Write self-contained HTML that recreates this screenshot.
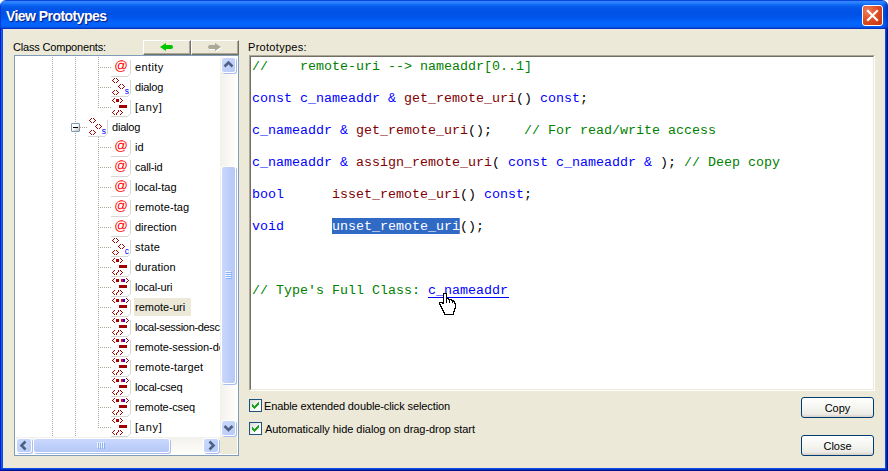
<!DOCTYPE html>
<html><head><meta charset="utf-8"><title>View Prototypes</title>
<style>
*{box-sizing:border-box;margin:0;padding:0}
html,body{width:888px;height:471px;overflow:hidden;background:#fff}
body{position:relative;font-family:"Liberation Sans",sans-serif;font-size:11px;color:#000}
#win{position:absolute;left:0;top:0;width:888px;height:471px;background:#ece9d8;overflow:hidden;border-radius:6px 6px 0 0}
#tb{position:absolute;left:0;top:0;width:888px;height:29px;
 background:linear-gradient(to bottom,#0a46dc 0px,#0a46dc 1px,#3485ff 1px,#2b80fd 3px,#1670f8 4px,#0860f0 6px,#0356e8 8px,#0052e6 14px,#0058ee 18px,#0462fa 22px,#0564fc 26px,#0450e0 27.5px,#0332c4 28px,#0332c4 29px);}
#tb .ttl{position:absolute;left:6px;top:8px;font-weight:bold;font-size:14px;line-height:16px;color:#fff;text-shadow:1px 1px 1px #0a1883;letter-spacing:-0.55px;white-space:nowrap}
#bl,#br{position:absolute;top:29px;width:3px;height:442px;background:linear-gradient(to right,#0019cf 0px,#0019cf 1px,#0d5eec 1px,#0d5eec 2px,#0a4fe0 2px,#0a4fe0 3px)}
#bl{left:0}#br{left:885px;background:linear-gradient(to right,#0a4fe6 0px,#0a4fe6 1px,#0028b4 1px,#0028b4 2px,#00138c 2px,#00138c 3px)}
#bb{position:absolute;left:0;top:468px;width:886px;height:3px;background:linear-gradient(to bottom,#0a4fe6 0px,#0a4fe6 1px,#0030c0 1px,#0030c0 2px,#00138c 2px,#00138c 3px)}
#x{position:absolute;left:862px;top:5px;width:21px;height:21px;border:1px solid #fff;border-radius:3px;
 background:radial-gradient(circle at 25% 25%,#ee7f5c 0%,#e04f26 45%,#c5330b 100%)}
.lab{position:absolute;white-space:nowrap;line-height:13px}
.ab{position:absolute;top:40px;width:48px;height:15px;background:#ece9d8;border:1px solid;border-color:#fff #716f64 #716f64 #fff;box-shadow:inset -1px -1px 0 #aca899}
#tree{position:absolute;left:14px;top:55px;width:225px;height:401px;border:1px solid #7f9db9;background:#fff}
#tc{position:absolute;left:1px;top:1px;width:204px;height:380px;overflow:hidden;background:#fff}
.row{position:absolute;height:20px;white-space:nowrap}
.ic{position:absolute;left:0;top:0}
.lb{position:absolute;left:22px;top:1px;height:18px;line-height:19px;padding:0 2px;font-size:11px}
.lb.sel{background:#ece9d8;left:23px;padding:0 0 0 1px;width:57px}
.vd{position:absolute;width:1px;background-image:linear-gradient(to bottom,#aca899 50%,transparent 50%);background-size:1px 2px}
.hd{position:absolute;height:1px;background-image:linear-gradient(to right,#aca899 50%,transparent 50%);background-size:2px 1px}
.sbtn{position:absolute;border:1px solid #fff;border-radius:3px;background:linear-gradient(135deg,#cbdafd,#b7c9f6);box-shadow:1px 1px 0 #a9bdf0}
#vs{position:absolute;left:205px;top:1px;width:17px;height:380px;background:linear-gradient(to right,#f3f1ec,#fefefb)}
#hs{position:absolute;left:1px;top:381px;width:204px;height:17px;background:linear-gradient(to bottom,#f3f1ec,#fefefb)}
#cn{position:absolute;left:205px;top:381px;width:17px;height:17px;background:#ece9d8}
.thumb{position:absolute;border:1px solid #fff;border-radius:3px;background:#c3d3fd;box-shadow:1px 1px 0 #a9bdf0}
#vs .thumb{background:linear-gradient(to right,#cad8fd,#bccdf9 60%,#b6c8f5)}
#hs .thumb{background:linear-gradient(to bottom,#cad8fd,#bccdf9 60%,#b6c8f5)}
#ta{position:absolute;left:249px;top:55px;width:626px;height:336px;background:#fff;border:1px solid;border-color:#aca899 #fff #fff #aca899;}
#ta:before{content:"";position:absolute;left:0;top:0;right:0;bottom:0;border:1px solid;border-color:#716f64 #ece9d8 #ece9d8 #716f64}
#code{position:absolute;left:2px;top:3px;font-family:"Liberation Mono",monospace;font-size:12px;transform:scaleX(1.11111);transform-origin:0 0;line-height:16px;white-space:pre;color:#000}
.g{color:#008000}.b{color:#0000ff}.r{color:#800000}
.hl{position:relative;color:#fff}
.hl:before{content:"";position:absolute;left:0;right:0;top:-2px;height:16px;background:#316ac5;z-index:-1}
.lk{color:#0000ff}
.cb{position:absolute;left:249px;width:13px;height:13px;border:1px solid #1c5180;background:linear-gradient(135deg,#dcdcd7,#fff 80%)}
.btn{position:absolute;left:801px;width:73px;height:21px;border:1px solid #003c74;border-radius:3px;background:linear-gradient(to bottom,#fff 0%,#f3f3ee 60%,#ecebe5 85%,#d6d0c5 100%);text-align:center;line-height:19px;padding-top:1px;font-size:11px}
</style></head><body>
<div id="win">
<div id="tb"><div class="ttl">View Prototypes</div>
<i style="position:absolute;left:883px;top:0;width:5px;height:29px;background:linear-gradient(to right,rgba(0,20,150,0),rgba(0,20,150,.55))"></i><i style="position:absolute;left:0;top:0;width:1px;height:29px;background:rgba(0,20,170,.45)"></i><div id="x"><svg width="19" height="19" viewBox="0 0 19 19" style="position:absolute;left:0;top:0"><path d="M5 5L14 14M14 5L5 14" stroke="#fff" stroke-width="2.2" stroke-linecap="square"/></svg></div></div>
<div id="bl"></div><div id="br"></div><div id="bb"></div><i style="position:absolute;left:0;top:468px;width:1px;height:3px;background:#0019cf"></i>

<div class="lab" style="left:13px;top:41px;letter-spacing:-0.18px">Class Components:</div>
<div class="lab" style="left:248px;top:41px;letter-spacing:0.3px">Prototypes:</div>

<div class="ab" style="left:143px"><svg width="46" height="13" style="position:absolute;left:0;top:0"><path d="M16 6L22 2V4H27A2 2 0 0 1 27 8H22V10Z" fill="#00c400"/></svg></div>
<div class="ab" style="left:191px"><svg width="46" height="13" style="position:absolute;left:0;top:0"><path transform="translate(1 1)" d="M29 6L23 2V4H18A2 2 0 0 0 18 8H23V10Z" fill="#fff"/><path d="M29 6L23 2V4H18A2 2 0 0 0 18 8H23V10Z" fill="#aca899"/></svg></div>

<div id="tree">
 <div id="tc">
  <i class="vd" style="left:36px;top:0;height:380px"></i>
  <i class="vd" style="left:59px;top:0;height:380px"></i>
  <i class="vd" style="left:82px;top:0;height:51px"></i>
  <i class="vd" style="left:82px;top:80px;height:291px"></i>
  <i class="hd" style="left:82px;top:10px;width:13px"></i><div class="row" style="top:0px;left:95px"><svg class="ic" width="20" height="20" viewBox="0 0 20 20" shape-rendering="crispEdges"><path d="M19.5 3V16.5L16.5 19.5H0" fill="none" stroke="#d6d6d2" stroke-width="1"/><text x="10" y="13" text-anchor="middle" text-rendering="geometricPrecision" font-family="Liberation Sans,sans-serif" font-size="13.4" fill="#ff0000">@</text></svg><span class="lb" style="letter-spacing:0.4px">entity</span></div><i class="hd" style="left:82px;top:30px;width:13px"></i><div class="row" style="top:20px;left:95px"><svg class="ic" width="20" height="20" viewBox="0 0 20 20" shape-rendering="crispEdges"><path d="M19.5 3V16.5L16.5 19.5H0" fill="none" stroke="#d6d6d2" stroke-width="1"/><path fill="#a00000" d="M3 1h1v1h-1zM2 2h1v1h-1zM1 3h1v1h-1zM2 4h1v1h-1zM3 5h1v1h-1zM5 1h1v1h-1zM6 2h1v1h-1zM7 3h1v1h-1zM6 4h1v1h-1zM5 5h1v1h-1zM9 7h1v1h-1zM8 8h1v1h-1zM7 9h1v1h-1zM8 10h1v1h-1zM9 11h1v1h-1zM11 7h1v1h-1zM12 8h1v1h-1zM13 9h1v1h-1zM12 10h1v1h-1zM11 11h1v1h-1zM3 13h1v1h-1zM2 14h1v1h-1zM1 15h1v1h-1zM2 16h1v1h-1zM3 17h1v1h-1zM5 13h1v1h-1zM6 14h1v1h-1zM7 15h1v1h-1zM6 16h1v1h-1zM5 17h1v1h-1z"/><text x="13.8" y="17" font-family="Liberation Sans,sans-serif" font-size="8.5" fill="#0000ff">s</text></svg><span class="lb" style="letter-spacing:-0.2px">dialog</span></div><i class="hd" style="left:82px;top:50px;width:13px"></i><div class="row" style="top:40px;left:95px"><svg class="ic" width="20" height="20" viewBox="0 0 20 20" shape-rendering="crispEdges"><path d="M19.5 3V16.5L16.5 19.5H0" fill="none" stroke="#d6d6d2" stroke-width="1"/><path fill="#a00000" d="M3 1h1v1h-1zM2 2h1v1h-1zM1 3h1v1h-1zM2 4h1v1h-1zM3 5h1v1h-1zM9 1h1v1h-1zM10 2h1v1h-1zM11 3h1v1h-1zM10 4h1v1h-1zM9 5h1v1h-1zM3 13h1v1h-1zM2 14h1v1h-1zM1 15h1v1h-1zM2 16h1v1h-1zM3 17h1v1h-1zM7 13h1v1h-1zM7 14h1v1h-1zM6 15h1v1h-1zM5 16h1v1h-1zM5 17h1v1h-1zM9 13h1v1h-1zM10 14h1v1h-1zM11 15h1v1h-1zM10 16h1v1h-1zM9 17h1v1h-1zM5 2h3v3h-3zM8 8h8v3h-8z"/></svg><span class="lb" style="letter-spacing:0.75px">[any]</span></div><i class="hd" style="left:64px;top:70px;width:7px"></i><div class="row" style="top:60px;left:72px"><svg class="ic" width="20" height="20" viewBox="0 0 20 20" shape-rendering="crispEdges"><path d="M19.5 3V16.5L16.5 19.5H0" fill="none" stroke="#d6d6d2" stroke-width="1"/><path fill="#a00000" d="M3 1h1v1h-1zM2 2h1v1h-1zM1 3h1v1h-1zM2 4h1v1h-1zM3 5h1v1h-1zM5 1h1v1h-1zM6 2h1v1h-1zM7 3h1v1h-1zM6 4h1v1h-1zM5 5h1v1h-1zM9 7h1v1h-1zM8 8h1v1h-1zM7 9h1v1h-1zM8 10h1v1h-1zM9 11h1v1h-1zM11 7h1v1h-1zM12 8h1v1h-1zM13 9h1v1h-1zM12 10h1v1h-1zM11 11h1v1h-1zM3 13h1v1h-1zM2 14h1v1h-1zM1 15h1v1h-1zM2 16h1v1h-1zM3 17h1v1h-1zM5 13h1v1h-1zM6 14h1v1h-1zM7 15h1v1h-1zM6 16h1v1h-1zM5 17h1v1h-1z"/><text x="13.8" y="17" font-family="Liberation Sans,sans-serif" font-size="8.5" fill="#0000ff">s</text></svg><span class="lb" style="letter-spacing:-0.2px">dialog</span></div><i class="hd" style="left:82px;top:90px;width:13px"></i><div class="row" style="top:80px;left:95px"><svg class="ic" width="20" height="20" viewBox="0 0 20 20" shape-rendering="crispEdges"><path d="M19.5 3V16.5L16.5 19.5H0" fill="none" stroke="#d6d6d2" stroke-width="1"/><text x="10" y="13" text-anchor="middle" text-rendering="geometricPrecision" font-family="Liberation Sans,sans-serif" font-size="13.4" fill="#ff0000">@</text></svg><span class="lb" style="letter-spacing:0px">id</span></div><i class="hd" style="left:82px;top:110px;width:13px"></i><div class="row" style="top:100px;left:95px"><svg class="ic" width="20" height="20" viewBox="0 0 20 20" shape-rendering="crispEdges"><path d="M19.5 3V16.5L16.5 19.5H0" fill="none" stroke="#d6d6d2" stroke-width="1"/><text x="10" y="13" text-anchor="middle" text-rendering="geometricPrecision" font-family="Liberation Sans,sans-serif" font-size="13.4" fill="#ff0000">@</text></svg><span class="lb" style="letter-spacing:-0.17px">call-id</span></div><i class="hd" style="left:82px;top:130px;width:13px"></i><div class="row" style="top:120px;left:95px"><svg class="ic" width="20" height="20" viewBox="0 0 20 20" shape-rendering="crispEdges"><path d="M19.5 3V16.5L16.5 19.5H0" fill="none" stroke="#d6d6d2" stroke-width="1"/><text x="10" y="13" text-anchor="middle" text-rendering="geometricPrecision" font-family="Liberation Sans,sans-serif" font-size="13.4" fill="#ff0000">@</text></svg><span class="lb" style="letter-spacing:0px">local-tag</span></div><i class="hd" style="left:82px;top:150px;width:13px"></i><div class="row" style="top:140px;left:95px"><svg class="ic" width="20" height="20" viewBox="0 0 20 20" shape-rendering="crispEdges"><path d="M19.5 3V16.5L16.5 19.5H0" fill="none" stroke="#d6d6d2" stroke-width="1"/><text x="10" y="13" text-anchor="middle" text-rendering="geometricPrecision" font-family="Liberation Sans,sans-serif" font-size="13.4" fill="#ff0000">@</text></svg><span class="lb" style="letter-spacing:0.11px">remote-tag</span></div><i class="hd" style="left:82px;top:170px;width:13px"></i><div class="row" style="top:160px;left:95px"><svg class="ic" width="20" height="20" viewBox="0 0 20 20" shape-rendering="crispEdges"><path d="M19.5 3V16.5L16.5 19.5H0" fill="none" stroke="#d6d6d2" stroke-width="1"/><text x="10" y="13" text-anchor="middle" text-rendering="geometricPrecision" font-family="Liberation Sans,sans-serif" font-size="13.4" fill="#ff0000">@</text></svg><span class="lb" style="letter-spacing:0px">direction</span></div><i class="hd" style="left:82px;top:190px;width:13px"></i><div class="row" style="top:180px;left:95px"><svg class="ic" width="20" height="20" viewBox="0 0 20 20" shape-rendering="crispEdges"><path d="M19.5 3V16.5L16.5 19.5H0" fill="none" stroke="#d6d6d2" stroke-width="1"/><path fill="#a00000" d="M3 1h1v1h-1zM2 2h1v1h-1zM1 3h1v1h-1zM2 4h1v1h-1zM3 5h1v1h-1zM5 1h1v1h-1zM6 2h1v1h-1zM7 3h1v1h-1zM6 4h1v1h-1zM5 5h1v1h-1zM9 7h1v1h-1zM8 8h1v1h-1zM7 9h1v1h-1zM8 10h1v1h-1zM9 11h1v1h-1zM11 7h1v1h-1zM12 8h1v1h-1zM13 9h1v1h-1zM12 10h1v1h-1zM11 11h1v1h-1zM3 13h1v1h-1zM2 14h1v1h-1zM1 15h1v1h-1zM2 16h1v1h-1zM3 17h1v1h-1zM5 13h1v1h-1zM6 14h1v1h-1zM7 15h1v1h-1zM6 16h1v1h-1zM5 17h1v1h-1z"/><text x="13.8" y="17" font-family="Liberation Sans,sans-serif" font-size="8.5" fill="#0000ff">c</text></svg><span class="lb" style="letter-spacing:0.25px">state</span></div><i class="hd" style="left:82px;top:210px;width:13px"></i><div class="row" style="top:200px;left:95px"><svg class="ic" width="20" height="20" viewBox="0 0 20 20" shape-rendering="crispEdges"><path d="M19.5 3V16.5L16.5 19.5H0" fill="none" stroke="#d6d6d2" stroke-width="1"/><path fill="#a00000" d="M3 1h1v1h-1zM2 2h1v1h-1zM1 3h1v1h-1zM2 4h1v1h-1zM3 5h1v1h-1zM9 1h1v1h-1zM10 2h1v1h-1zM11 3h1v1h-1zM10 4h1v1h-1zM9 5h1v1h-1zM3 13h1v1h-1zM2 14h1v1h-1zM1 15h1v1h-1zM2 16h1v1h-1zM3 17h1v1h-1zM7 13h1v1h-1zM7 14h1v1h-1zM6 15h1v1h-1zM5 16h1v1h-1zM5 17h1v1h-1zM9 13h1v1h-1zM10 14h1v1h-1zM11 15h1v1h-1zM10 16h1v1h-1zM9 17h1v1h-1zM5 2h3v3h-3zM8 8h8v3h-8z"/></svg><span class="lb" style="letter-spacing:0.14px">duration</span></div><i class="hd" style="left:82px;top:230px;width:13px"></i><div class="row" style="top:220px;left:95px"><svg class="ic" width="20" height="20" viewBox="0 0 20 20" shape-rendering="crispEdges"><path d="M19.5 3V16.5L16.5 19.5H0" fill="none" stroke="#d6d6d2" stroke-width="1"/><path fill="#a00000" d="M3 1h1v1h-1zM2 2h1v1h-1zM1 3h1v1h-1zM2 4h1v1h-1zM3 5h1v1h-1zM15 1h1v1h-1zM16 2h1v1h-1zM17 3h1v1h-1zM16 4h1v1h-1zM15 5h1v1h-1zM3 13h1v1h-1zM2 14h1v1h-1zM1 15h1v1h-1zM2 16h1v1h-1zM3 17h1v1h-1zM7 13h1v1h-1zM7 14h1v1h-1zM6 15h1v1h-1zM5 16h1v1h-1zM5 17h1v1h-1zM9 13h1v1h-1zM10 14h1v1h-1zM11 15h1v1h-1zM10 16h1v1h-1zM9 17h1v1h-1zM5 2h3v3h-3zM8 8h8v3h-8z"/><path fill="#ff0000" d="M10 2h2v3h-2z"/><path fill="#0000ff" d="M12 2h2v3h-2z"/></svg><span class="lb" style="letter-spacing:-0.12px">local-uri</span></div><i class="hd" style="left:82px;top:250px;width:13px"></i><div class="row" style="top:240px;left:95px"><svg class="ic" width="20" height="20" viewBox="0 0 20 20" shape-rendering="crispEdges"><path d="M19.5 3V16.5L16.5 19.5H0" fill="none" stroke="#d6d6d2" stroke-width="1"/><path fill="#a00000" d="M3 1h1v1h-1zM2 2h1v1h-1zM1 3h1v1h-1zM2 4h1v1h-1zM3 5h1v1h-1zM15 1h1v1h-1zM16 2h1v1h-1zM17 3h1v1h-1zM16 4h1v1h-1zM15 5h1v1h-1zM3 13h1v1h-1zM2 14h1v1h-1zM1 15h1v1h-1zM2 16h1v1h-1zM3 17h1v1h-1zM7 13h1v1h-1zM7 14h1v1h-1zM6 15h1v1h-1zM5 16h1v1h-1zM5 17h1v1h-1zM9 13h1v1h-1zM10 14h1v1h-1zM11 15h1v1h-1zM10 16h1v1h-1zM9 17h1v1h-1zM5 2h3v3h-3zM8 8h8v3h-8z"/><path fill="#ff0000" d="M10 2h2v3h-2z"/><path fill="#0000ff" d="M12 2h2v3h-2z"/></svg><span class="lb sel" style="letter-spacing:0px">remote-uri</span></div><i class="hd" style="left:82px;top:270px;width:13px"></i><div class="row" style="top:260px;left:95px"><svg class="ic" width="20" height="20" viewBox="0 0 20 20" shape-rendering="crispEdges"><path d="M19.5 3V16.5L16.5 19.5H0" fill="none" stroke="#d6d6d2" stroke-width="1"/><path fill="#a00000" d="M3 1h1v1h-1zM2 2h1v1h-1zM1 3h1v1h-1zM2 4h1v1h-1zM3 5h1v1h-1zM15 1h1v1h-1zM16 2h1v1h-1zM17 3h1v1h-1zM16 4h1v1h-1zM15 5h1v1h-1zM3 13h1v1h-1zM2 14h1v1h-1zM1 15h1v1h-1zM2 16h1v1h-1zM3 17h1v1h-1zM7 13h1v1h-1zM7 14h1v1h-1zM6 15h1v1h-1zM5 16h1v1h-1zM5 17h1v1h-1zM9 13h1v1h-1zM10 14h1v1h-1zM11 15h1v1h-1zM10 16h1v1h-1zM9 17h1v1h-1zM5 2h3v3h-3zM8 8h8v3h-8z"/><path fill="#ff0000" d="M10 2h2v3h-2z"/><path fill="#0000ff" d="M12 2h2v3h-2z"/></svg><span class="lb" style="letter-spacing:-0.32px">local-session-description</span></div><i class="hd" style="left:82px;top:290px;width:13px"></i><div class="row" style="top:280px;left:95px"><svg class="ic" width="20" height="20" viewBox="0 0 20 20" shape-rendering="crispEdges"><path d="M19.5 3V16.5L16.5 19.5H0" fill="none" stroke="#d6d6d2" stroke-width="1"/><path fill="#a00000" d="M3 1h1v1h-1zM2 2h1v1h-1zM1 3h1v1h-1zM2 4h1v1h-1zM3 5h1v1h-1zM15 1h1v1h-1zM16 2h1v1h-1zM17 3h1v1h-1zM16 4h1v1h-1zM15 5h1v1h-1zM3 13h1v1h-1zM2 14h1v1h-1zM1 15h1v1h-1zM2 16h1v1h-1zM3 17h1v1h-1zM7 13h1v1h-1zM7 14h1v1h-1zM6 15h1v1h-1zM5 16h1v1h-1zM5 17h1v1h-1zM9 13h1v1h-1zM10 14h1v1h-1zM11 15h1v1h-1zM10 16h1v1h-1zM9 17h1v1h-1zM5 2h3v3h-3zM8 8h8v3h-8z"/><path fill="#ff0000" d="M10 2h2v3h-2z"/><path fill="#0000ff" d="M12 2h2v3h-2z"/></svg><span class="lb" style="letter-spacing:-0.08px">remote-session-description</span></div><i class="hd" style="left:82px;top:310px;width:13px"></i><div class="row" style="top:300px;left:95px"><svg class="ic" width="20" height="20" viewBox="0 0 20 20" shape-rendering="crispEdges"><path d="M19.5 3V16.5L16.5 19.5H0" fill="none" stroke="#d6d6d2" stroke-width="1"/><path fill="#a00000" d="M3 1h1v1h-1zM2 2h1v1h-1zM1 3h1v1h-1zM2 4h1v1h-1zM3 5h1v1h-1zM15 1h1v1h-1zM16 2h1v1h-1zM17 3h1v1h-1zM16 4h1v1h-1zM15 5h1v1h-1zM3 13h1v1h-1zM2 14h1v1h-1zM1 15h1v1h-1zM2 16h1v1h-1zM3 17h1v1h-1zM7 13h1v1h-1zM7 14h1v1h-1zM6 15h1v1h-1zM5 16h1v1h-1zM5 17h1v1h-1zM9 13h1v1h-1zM10 14h1v1h-1zM11 15h1v1h-1zM10 16h1v1h-1zM9 17h1v1h-1zM5 2h3v3h-3zM8 8h8v3h-8z"/><path fill="#ff0000" d="M10 2h2v3h-2z"/><path fill="#0000ff" d="M12 2h2v3h-2z"/></svg><span class="lb" style="letter-spacing:0.17px">remote-target</span></div><i class="hd" style="left:82px;top:330px;width:13px"></i><div class="row" style="top:320px;left:95px"><svg class="ic" width="20" height="20" viewBox="0 0 20 20" shape-rendering="crispEdges"><path d="M19.5 3V16.5L16.5 19.5H0" fill="none" stroke="#d6d6d2" stroke-width="1"/><path fill="#a00000" d="M3 1h1v1h-1zM2 2h1v1h-1zM1 3h1v1h-1zM2 4h1v1h-1zM3 5h1v1h-1zM15 1h1v1h-1zM16 2h1v1h-1zM17 3h1v1h-1zM16 4h1v1h-1zM15 5h1v1h-1zM3 13h1v1h-1zM2 14h1v1h-1zM1 15h1v1h-1zM2 16h1v1h-1zM3 17h1v1h-1zM7 13h1v1h-1zM7 14h1v1h-1zM6 15h1v1h-1zM5 16h1v1h-1zM5 17h1v1h-1zM9 13h1v1h-1zM10 14h1v1h-1zM11 15h1v1h-1zM10 16h1v1h-1zM9 17h1v1h-1zM5 2h3v3h-3zM8 8h8v3h-8z"/><path fill="#ff0000" d="M10 2h2v3h-2z"/><path fill="#0000ff" d="M12 2h2v3h-2z"/></svg><span class="lb" style="letter-spacing:-0.22px">local-cseq</span></div><i class="hd" style="left:82px;top:350px;width:13px"></i><div class="row" style="top:340px;left:95px"><svg class="ic" width="20" height="20" viewBox="0 0 20 20" shape-rendering="crispEdges"><path d="M19.5 3V16.5L16.5 19.5H0" fill="none" stroke="#d6d6d2" stroke-width="1"/><path fill="#a00000" d="M3 1h1v1h-1zM2 2h1v1h-1zM1 3h1v1h-1zM2 4h1v1h-1zM3 5h1v1h-1zM15 1h1v1h-1zM16 2h1v1h-1zM17 3h1v1h-1zM16 4h1v1h-1zM15 5h1v1h-1zM3 13h1v1h-1zM2 14h1v1h-1zM1 15h1v1h-1zM2 16h1v1h-1zM3 17h1v1h-1zM7 13h1v1h-1zM7 14h1v1h-1zM6 15h1v1h-1zM5 16h1v1h-1zM5 17h1v1h-1zM9 13h1v1h-1zM10 14h1v1h-1zM11 15h1v1h-1zM10 16h1v1h-1zM9 17h1v1h-1zM5 2h3v3h-3zM8 8h8v3h-8z"/><path fill="#ff0000" d="M10 2h2v3h-2z"/><path fill="#0000ff" d="M12 2h2v3h-2z"/></svg><span class="lb" style="letter-spacing:-0.1px">remote-cseq</span></div><i class="hd" style="left:82px;top:370px;width:13px"></i><div class="row" style="top:360px;left:95px"><svg class="ic" width="20" height="20" viewBox="0 0 20 20" shape-rendering="crispEdges"><path d="M19.5 3V16.5L16.5 19.5H0" fill="none" stroke="#d6d6d2" stroke-width="1"/><path fill="#a00000" d="M3 1h1v1h-1zM2 2h1v1h-1zM1 3h1v1h-1zM2 4h1v1h-1zM3 5h1v1h-1zM9 1h1v1h-1zM10 2h1v1h-1zM11 3h1v1h-1zM10 4h1v1h-1zM9 5h1v1h-1zM3 13h1v1h-1zM2 14h1v1h-1zM1 15h1v1h-1zM2 16h1v1h-1zM3 17h1v1h-1zM7 13h1v1h-1zM7 14h1v1h-1zM6 15h1v1h-1zM5 16h1v1h-1zM5 17h1v1h-1zM9 13h1v1h-1zM10 14h1v1h-1zM11 15h1v1h-1zM10 16h1v1h-1zM9 17h1v1h-1zM5 2h3v3h-3zM8 8h8v3h-8z"/></svg><span class="lb" style="letter-spacing:0.75px">[any]</span></div>
  <div style="position:absolute;left:55px;top:66px;width:9px;height:9px;border:1px solid #7898b5;border-radius:1px;background:linear-gradient(135deg,#fff 40%,#c5beab)"><i style="position:absolute;left:1px;top:3px;width:5px;height:1px;background:#000"></i></div>
 </div>
 <div id="vs">
  <div class="sbtn" style="left:1px;top:0;width:15px;height:16px"><svg width="13" height="14" style="position:absolute;left:0;top:0"><path d="M2.5 8.5L6.5 4.5L10.5 8.5" fill="none" stroke="#4d6185" stroke-width="2.6"/></svg></div>
  <div class="thumb" style="left:1px;top:109px;width:15px;height:218px"><svg width="13" height="10" style="position:absolute;left:0;top:104px"><path d="M3 .5H9M3 2.5H9M3 4.5H9M3 6.5H9" stroke="#eef4fe"/><path d="M4 1.5H10M4 3.5H10M4 5.5H10M4 7.5H10" stroke="#8cb0f8"/></svg></div>
  <div class="sbtn" style="left:1px;top:363px;width:15px;height:16px"><svg width="13" height="14" style="position:absolute;left:0;top:0"><path d="M2.5 5L6.5 9L10.5 5" fill="none" stroke="#4d6185" stroke-width="2.6"/></svg></div>
 </div>
 <div id="hs">
  <div class="sbtn" style="left:0;top:1px;width:16px;height:15px"><svg width="14" height="13" style="position:absolute;left:0;top:0"><path d="M8.5 2.5L4.5 6.5L8.5 10.5" fill="none" stroke="#4d6185" stroke-width="2.6"/></svg></div>
  <div class="thumb" style="left:17px;top:1px;width:137px;height:15px"><svg width="10" height="13" style="position:absolute;left:63px;top:0"><path d="M.5 3V9M2.5 3V9M4.5 3V9M6.5 3V9" stroke="#eef4fe"/><path d="M1.5 4V10M3.5 4V10M5.5 4V10M7.5 4V10" stroke="#8cb0f8"/></svg></div>
  <div class="sbtn" style="left:187px;top:1px;width:16px;height:15px"><svg width="14" height="13" style="position:absolute;left:0;top:0"><path d="M5.5 2.5L9.5 6.5L5.5 10.5" fill="none" stroke="#4d6185" stroke-width="2.6"/></svg></div>
 </div>
 <div id="cn"></div>
</div>

<div id="ta"><div id="code"><span class="g">//    remote-uri --&gt; nameaddr[0..1]</span>

<span class="b">const c_nameaddr &amp;</span> <span class="r">get_remote_uri</span>() <span class="b">const</span>;

<span class="b">c_nameaddr &amp;</span> <span class="r">get_remote_uri</span>();    <span class="g">// For read/write access</span>

<span class="b">c_nameaddr &amp;</span> <span class="r">assign_remote_uri</span>( <span class="b">const c_nameaddr &amp;</span> ); <span class="g">// Deep copy</span>

<span class="b">bool</span>      <span class="r">isset_remote_uri</span>() <span class="b">const</span>;

<span class="b">void</span>      <span class="hl">unset_remote_uri</span>();



<span class="g">// Type's Full Class: </span><span class="lk">c_nameaddr</span></div>
<i style="position:absolute;left:178px;top:241px;width:81px;height:1px;background:#0000ff"></i>
<svg width="17" height="22" viewBox="0 0 17 22" shape-rendering="crispEdges" style="position:absolute;left:189px;top:237px"><path d="M5.5 .5H7.5V5.5H9.5V6.5H12.5V7.5H14.5V8.5H15.5V10.5H16.5V15.5H15.5V18.5H14.5V21.5H5.5V19.5H4.5V17.5H3.5V15.5H2.5V13.5H1.5V11.5H.5V9.5H3.5V10.5H4.5V.5Z" fill="#fff" stroke="#000" stroke-width="1"/><path d="M7.5 6V10M10.5 7V10M13.5 8V10" stroke="#000" fill="none"/></svg>
</div>

<div class="cb" style="top:399px"><svg width="11" height="11" shape-rendering="crispEdges" style="position:absolute;left:0;top:0"><path d="M2 4h1v3h-1zM3 5h1v3h-1zM4 6h1v3h-1zM5 5h1v3h-1zM6 4h1v3h-1zM7 3h1v3h-1zM8 2h1v3h-1z" fill="#21a121"/></svg></div>
<div class="lab" style="left:264px;top:400px;letter-spacing:-0.11px">Enable extended double-click selection</div>
<div class="cb" style="top:422px"><svg width="11" height="11" shape-rendering="crispEdges" style="position:absolute;left:0;top:0"><path d="M2 4h1v3h-1zM3 5h1v3h-1zM4 6h1v3h-1zM5 5h1v3h-1zM6 4h1v3h-1zM7 3h1v3h-1zM8 2h1v3h-1z" fill="#21a121"/></svg></div>
<div class="lab" style="left:265px;top:423px;letter-spacing:-0.05px">Automatically hide dialog on drag-drop start</div>

<div class="btn" style="top:397px">Copy</div>
<div class="btn" style="top:435px">Close</div>
</div>
</body></html>
